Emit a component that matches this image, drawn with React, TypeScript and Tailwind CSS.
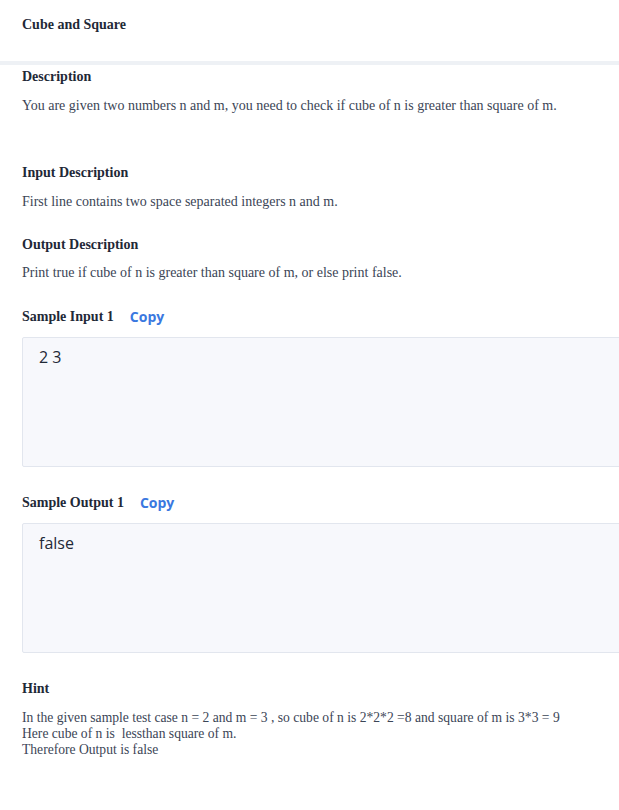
import React from 'react';

const serif = { fontFamily: '"Liberation Serif", "Times New Roman", serif' };

const Heading = ({ children, className = '' }: { children: React.ReactNode; className?: string }) => (
  <h3 className={`font-['Liberation_Serif',serif] text-[14px] leading-[20px] font-bold text-[#1f2937] ${className}`}>
    {children}
  </h3>
);

const Body = ({ children, className = '' }: { children: React.ReactNode; className?: string }) => (
  <p className={`font-['Liberation_Serif',serif] text-[14px] leading-[20px] text-[#3b4556] ${className}`}>
    {children}
  </p>
);

const SampleBox = ({ text }: { text: string }) => (
  <div className="mt-[10px] h-[130px] w-[620px] rounded-[2px] border border-[#e2e6ee] bg-[#f7f8fc] px-4 pt-[7px]">
    <pre className="font-['Open_Sans',sans-serif] text-[16px] leading-[24px] text-[#1f2937]">{text}</pre>
  </div>
);

const SampleHeader = ({ label, className = '' }: { label: string; className?: string }) => (
  <div className={`flex items-center gap-[16px] ${className}`}>
    <Heading>{label}</Heading>
    <button className="font-['Open_Sans',sans-serif] text-[14px] leading-[20px] font-bold text-[#3a78e0]">
      Copy
    </button>
  </div>
);

export default function App() {
  return (
    <div className="min-h-[810px] w-[619px] overflow-hidden bg-white" style={serif}>
      {/* Title bar */}
      <div className="h-[61px] px-[22px] pt-[15px]">
        <Heading>Cube and Square</Heading>
      </div>
      <div className="h-1 w-full bg-[#eef1f5]" />

      <div className="px-[22px] pt-[2px] pb-10">
        <Heading>Description</Heading>
        <Body className="mt-[9px]">
          You are given two numbers n and m, you need to check if cube of n is greater than square of m.
        </Body>

        <Heading className="mt-[47px]">Input Description</Heading>
        <Body className="mt-[9px]">First line contains two space separated integers n and m.</Body>

        <Heading className="mt-[23px]">Output Description</Heading>
        <Body className="mt-[8px]">Print true if cube of n is greater than square of m, or else print false.</Body>

        <SampleHeader label="Sample Input 1" className="mt-[24px]" />
        <SampleBox text="2 3" />

        <SampleHeader label="Sample Output 1" className="mt-[26px]" />
        <SampleBox text="false" />

        <Heading className="mt-[26px]">Hint</Heading>
        <div className="mt-[11px] font-['Liberation_Serif',serif] text-[13.6px] leading-[16px] text-[#3b4556]">
          <p>In the given sample test case n = 2 and m = 3 , so cube of n is 2*2*2 =8 and square of m is 3*3 = 9</p>
          <p className="whitespace-pre">Here cube of n is  lessthan square of m.</p>
          <p>Therefore Output is false</p>
        </div>
      </div>
    </div>
  );
}
